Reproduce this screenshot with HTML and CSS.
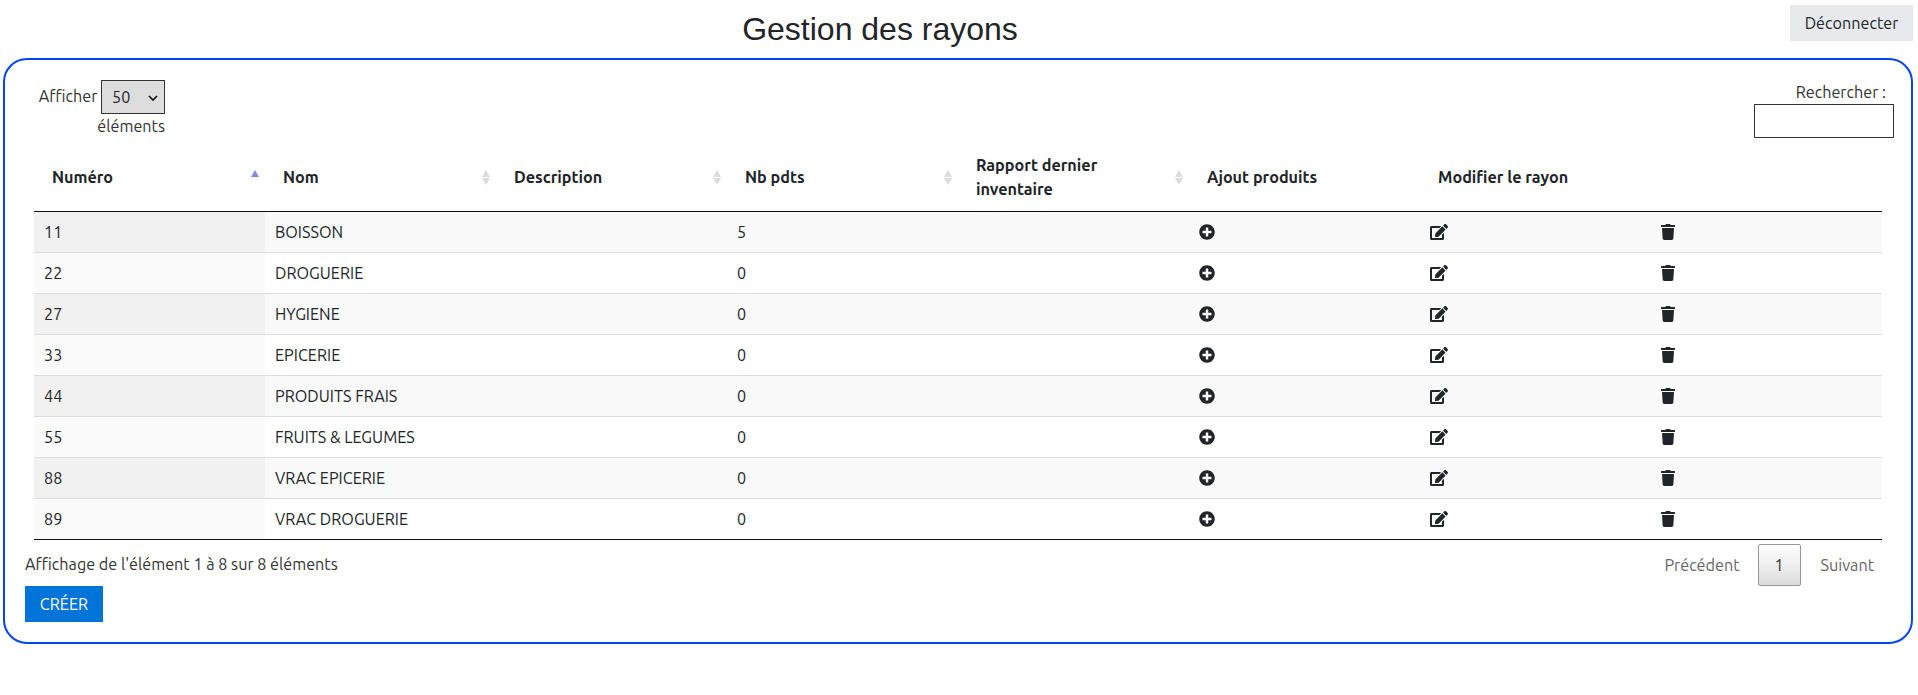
FILE: index.html
```html
<!DOCTYPE html>
<html lang="fr">
<head>
<meta charset="utf-8">
<title>Gestion des rayons</title>
<link rel="stylesheet" href="styles.css">
</head>
<body>
<svg class="sprite" xmlns="http://www.w3.org/2000/svg">
  <symbol id="i-plus" viewBox="0 0 512 512"><path d="M256 8C119 8 8 119 8 256s111 248 248 248 248-111 248-248S393 8 256 8zm144 276c0 6.6-5.4 12-12 12h-92v92c0 6.6-5.4 12-12 12h-56c-6.6 0-12-5.4-12-12v-92h-92c-6.6 0-12-5.4-12-12v-56c0-6.6 5.4-12 12-12h92v-92c0-6.6 5.4-12 12-12h56c6.6 0 12 5.4 12 12v92h92c6.6 0 12 5.4 12 12v56z"/></symbol>
  <symbol id="i-edit" viewBox="0 0 576 512"><path d="M402.6 83.2l90.2 90.2c3.8 3.8 3.8 10 0 13.8L274.4 405.6l-92.8 10.3c-12.4 1.4-22.9-9.1-21.5-21.5l10.3-92.8L388.8 83.2c3.8-3.8 10-3.8 13.8 0zm162-22.9l-48.8-48.8c-15.2-15.2-39.9-15.2-55.2 0l-35.4 35.4c-3.8 3.8-3.8 10 0 13.8l90.2 90.2c3.8 3.8 10 3.8 13.8 0l35.4-35.4c15.2-15.3 15.2-40 0-55.2zM384 346.2V448H64V128h229.8c3.2 0 6.2-1.3 8.5-3.5l40-40c7.6-7.6 2.2-20.5-8.5-20.5H48C21.5 64 0 85.5 0 112v352c0 26.5 21.5 48 48 48h352c26.5 0 48-21.5 48-48V306.2c0-10.7-12.9-16-20.5-8.5l-40 40c-2.2 2.3-3.5 5.3-3.5 8.5z"/></symbol>
  <symbol id="i-trash" viewBox="0 0 448 512"><path d="M432 32H312l-9.4-18.7A24 24 0 0 0 281.1 0H166.8a23.72 23.72 0 0 0-21.4 13.3L136 32H16A16 16 0 0 0 0 48v32a16 16 0 0 0 16 16h416a16 16 0 0 0 16-16V48a16 16 0 0 0-16-16zM53.2 467a48 48 0 0 0 47.9 45h245.8a48 48 0 0 0 47.9-45L416 128H32z"/></symbol>
</svg>
<header class="top">
  <h1 class="title">Gestion des rayons</h1>
  <a class="logout" href="#">Déconnecter</a>
</header>
<main class="panel">
  <div class="controls">
    <label class="length">Afficher <select class="length-select"><option>10</option><option>25</option><option selected>50</option><option>100</option></select> éléments</label>
    <label class="search"><span>Rechercher :</span><input class="search-input" type="search"></label>
  </div>
  <table class="grid">
    <thead>
      <tr>
        <th class="sort-asc">Numéro</th>
        <th class="sort-both">Nom</th>
        <th class="sort-both">Description</th>
        <th class="sort-both">Nb pdts</th>
        <th class="sort-both">Rapport dernier inventaire</th>
        <th>Ajout produits</th>
        <th>Modifier le rayon</th>
        <th></th>
      </tr>
    </thead>
    <tbody>
      <tr><td>11</td><td>BOISSON</td><td></td><td>5</td><td></td><td><svg class="ic ic-plus"><use href="#i-plus"/></svg></td><td><svg class="ic ic-edit"><use href="#i-edit"/></svg></td><td><svg class="ic ic-trash"><use href="#i-trash"/></svg></td></tr>
      <tr><td>22</td><td>DROGUERIE</td><td></td><td>0</td><td></td><td><svg class="ic ic-plus"><use href="#i-plus"/></svg></td><td><svg class="ic ic-edit"><use href="#i-edit"/></svg></td><td><svg class="ic ic-trash"><use href="#i-trash"/></svg></td></tr>
      <tr><td>27</td><td>HYGIENE</td><td></td><td>0</td><td></td><td><svg class="ic ic-plus"><use href="#i-plus"/></svg></td><td><svg class="ic ic-edit"><use href="#i-edit"/></svg></td><td><svg class="ic ic-trash"><use href="#i-trash"/></svg></td></tr>
      <tr><td>33</td><td>EPICERIE</td><td></td><td>0</td><td></td><td><svg class="ic ic-plus"><use href="#i-plus"/></svg></td><td><svg class="ic ic-edit"><use href="#i-edit"/></svg></td><td><svg class="ic ic-trash"><use href="#i-trash"/></svg></td></tr>
      <tr><td>44</td><td>PRODUITS FRAIS</td><td></td><td>0</td><td></td><td><svg class="ic ic-plus"><use href="#i-plus"/></svg></td><td><svg class="ic ic-edit"><use href="#i-edit"/></svg></td><td><svg class="ic ic-trash"><use href="#i-trash"/></svg></td></tr>
      <tr><td>55</td><td>FRUITS &amp; LEGUMES</td><td></td><td>0</td><td></td><td><svg class="ic ic-plus"><use href="#i-plus"/></svg></td><td><svg class="ic ic-edit"><use href="#i-edit"/></svg></td><td><svg class="ic ic-trash"><use href="#i-trash"/></svg></td></tr>
      <tr><td>88</td><td>VRAC EPICERIE</td><td></td><td>0</td><td></td><td><svg class="ic ic-plus"><use href="#i-plus"/></svg></td><td><svg class="ic ic-edit"><use href="#i-edit"/></svg></td><td><svg class="ic ic-trash"><use href="#i-trash"/></svg></td></tr>
      <tr><td>89</td><td>VRAC DROGUERIE</td><td></td><td>0</td><td></td><td><svg class="ic ic-plus"><use href="#i-plus"/></svg></td><td><svg class="ic ic-edit"><use href="#i-edit"/></svg></td><td><svg class="ic ic-trash"><use href="#i-trash"/></svg></td></tr>
    </tbody>
  </table>
  <div class="footer">
    <div class="info">Affichage de l'élément 1 à 8 sur 8 éléments</div>
    <nav class="pager">
      <a class="pager-link" href="#">Précédent</a>
      <a class="pager-current" href="#">1</a>
      <a class="pager-link" href="#">Suivant</a>
    </nav>
  </div>
  <a class="create" href="#">CRÉER</a>
</main>
</body>
</html>
```
FILE: styles.css
```css
* { box-sizing: border-box; }
html, body { margin: 0; padding: 0; background: #fff; }
body {
  font-family: "Ubuntu", "Noto Sans", "Open Sans", sans-serif;
  font-size: 16.2px;
  line-height: 24px;
  color: #212529;
  height: 695px;
  overflow: hidden;
}
a { text-decoration: none; color: inherit; }
.sprite { display: none; }

.top { display: flex; align-items: flex-start; height: 58px; padding: 5px 5px 0 0; }
.title {
  flex: 1;
  margin: 6px 0 0;
  font-family: "Liberation Sans", Arial, sans-serif;
  font-size: 32px;
  font-weight: 400;
  line-height: 36px;
  text-align: center;
}
.logout {
  width: 123px;
  height: 36px;
  margin-left: 30px;
  background: #e7e9ed;
  text-align: center;
  line-height: 36px;
}

.panel {
  height: 586px;
  margin: 0 5px 0 3px;
  padding: 20px 21px 0 20px;
  border: 2px solid #0046f0;
  border-radius: 24px;
}
.controls { display: flex; justify-content: space-between; align-items: flex-start; height: 63px; margin-right: 4px; }
.length { display: block; width: 127px; margin-left: 13px; text-align: right; color: #333; }
.length-select {
  appearance: none;
  width: 64px;
  height: 34px;
  padding: 0 0 0 10px;
  vertical-align: -1px;
  font: inherit;
  color: #212529;
  background: #ddd url("data:image/svg+xml,%3Csvg xmlns='http://www.w3.org/2000/svg' width='10' height='6' viewBox='0 0 10 6'%3E%3Cpath d='M1 1l4 4 4-4' fill='none' stroke='%23111' stroke-width='1.7'/%3E%3C/svg%3E") no-repeat 46px 14px;
  border: 1px solid #333;
  border-radius: 0;
}
.search { display: flex; flex-direction: column; align-items: flex-end; color: #333; }
.search-input { width: 140px; height: 34px; margin-right: -8px; border: 1px solid #333; background: #fff; border-radius: 0; }

.grid { width: 1848px; margin-left: 9px; border-collapse: separate; border-spacing: 0; table-layout: fixed; }
.grid th {
  padding: 10px 18px;
  height: 69px;
  text-align: left;
  font-weight: 700;
  border-bottom: 1px solid #111;
}
.grid td { height: 41px; padding: 0 10px; border-top: 1px solid #ddd; }
.grid tbody tr:first-child td { border-top: 0; height: 40px; }
.grid tbody tr:last-child td { border-bottom: 1px solid #111; height: 42px; }
.grid tbody tr:nth-child(odd) td { background: #f9f9f9; }
.grid tbody tr:nth-child(odd) td:first-child { background: #f1f1f1; }
.grid tbody tr:nth-child(even) td:first-child { background: #fafafa; }

.sort-asc { position: relative; }
.sort-asc::after {
  content: "";
  position: absolute;
  right: 6px;
  top: 27px;
  border-left: 4px solid transparent;
  border-right: 4px solid transparent;
  border-bottom: 7px solid #8888dd;
}
.sort-both { position: relative; }
.sort-both::before, .sort-both::after {
  content: "";
  position: absolute;
  right: 6px;
  border-left: 4px solid transparent;
  border-right: 4px solid transparent;
}
.sort-both::before { top: 27px; border-bottom: 7px solid #dcdcdc; }
.sort-both::after { top: 35px; border-top: 7px solid #dcdcdc; }

.ic { display: block; height: 16px; fill: #212529; }
.ic-plus { width: 16px; }
.ic-edit { width: 18px; }
.ic-trash { width: 14px; }

.footer { display: flex; justify-content: space-between; height: 46px; padding-top: 4px; }
.info { padding-top: 8px; color: #333; }
.pager { display: flex; align-items: flex-start; color: #666; }
.pager-link { padding: 9px 16px; }
.pager-current {
  width: 43px;
  height: 42px;
  margin: 0 4px 0 2px;
  border: 1px solid #979797;
  border-radius: 2px;
  background: linear-gradient(#fff, #dcdcdc);
  color: #333;
  text-align: center;
  line-height: 40px;
}
.create {
  display: block;
  width: 78px;
  height: 36px;
  background: #0074d9;
  color: #fff;
  text-align: center;
  line-height: 36px;
}
```
